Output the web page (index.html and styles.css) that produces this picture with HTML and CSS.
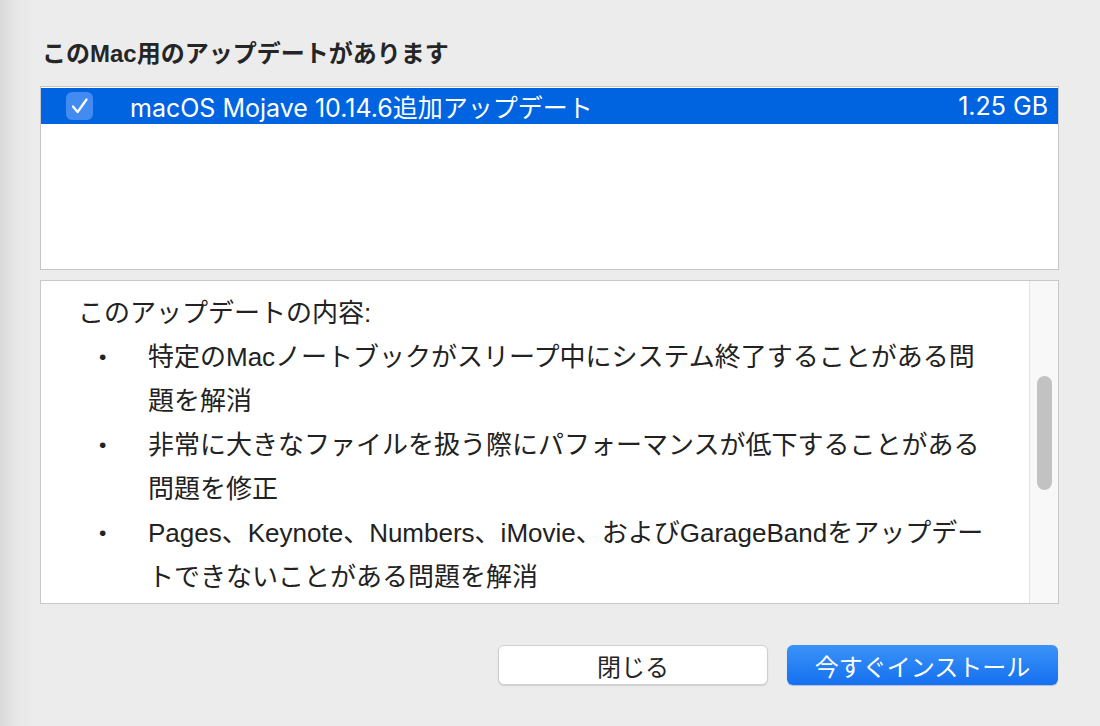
FILE: index.html
```html
<!DOCTYPE html>
<html lang="ja">
<head>
    <meta charset="UTF-8">
    <title>ソフトウェアアップデート</title>
    <link rel="stylesheet" href="styles.css">
</head>
<body>
    <div class="window">
        <h1 class="title">このMac用のアップデートがあります</h1>

        <div class="update-list">
            <div class="update-row selected">
                <span class="checkbox">
                    <svg width="20" height="20" viewBox="0 0 20 20"><path d="M3 10.5 L7.6 16 L16.5 3.5" fill="none" stroke="#fff" stroke-width="2.3" stroke-linecap="round" stroke-linejoin="round"/></svg>
                </span>
                <span class="update-name">macOS Mojave 10.14.6追加アップデート</span>
                <span class="update-size">1.25 GB</span>
            </div>
        </div>

        <div class="notes">
            <div class="notes-body">
                <p>このアップデートの内容:</p>
                <ul>
                    <li>特定のMacノートブックがスリープ中にシステム終了することがある問題を解消</li>
                    <li>非常に大きなファイルを扱う際にパフォーマンスが低下することがある問題を修正</li>
                    <li>Pages、Keynote、Numbers、iMovie、およびGarageBandをアップデートできないことがある問題を解消</li>
                </ul>
            </div>
            <div class="scrollbar">
                <div class="thumb"></div>
            </div>
        </div>

        <div class="buttons">
            <button class="btn">閉じる</button>
            <button class="btn primary">今すぐインストール</button>
        </div>
    </div>
</body>
</html>
```

FILE: styles.css
```css
body {
    margin: 0; padding: 0; height: 726px; overflow: hidden;
    background: linear-gradient(to right, #d9d9d9 0, #e6e6e6 14px, #ececec 34px, #ececec 100%);
    font-family: Inter, "Liberation Sans", "Noto Sans CJK JP", sans-serif; color: #222;
}
.window {
    padding: 38px 41px 0 40px;
}
.title {
    margin: 0 0 16px 2px; font-size: 24px; line-height: 32px; font-weight: 700; color: #252525;
    font-family: "Liberation Sans", "Noto Sans CJK JP", sans-serif;
}

/* update list */
.update-list {
    height: 184px; box-sizing: border-box; border: 1px solid #c6c6c6; background: #fff; padding-top: 1px;
}
.update-row {
    display: flex; align-items: center; height: 36px; padding: 0 10px 0 25px; font-size: 25px;
}
.update-row.selected { background: #0064e1; color: #fff; }
.checkbox {
    width: 27px; height: 28px; border-radius: 6px; background: #428bf0; display: flex; align-items: center; justify-content: center;
}
.update-name { margin-left: 37px; flex: 1; }

/* release notes */
.notes {
    margin-top: 10px; height: 324px; box-sizing: border-box; border: 1px solid #c8c8c8; background: #fff;
    display: flex; overflow: hidden;
}
.notes-body {
    flex: 1; padding: 10px 0 0 37px; font-family: "Liberation Sans", "Noto Sans CJK JP", sans-serif;
    font-size: 26px; line-height: 44px; color: #222;
}
.notes-body p { margin: 0; }
.notes-body ul { margin: 0; padding: 0; list-style: none; width: 915px; }
.notes-body li { display: flex; }
.notes-body li::before {
    content: "•"; flex: 0 0 70px; box-sizing: border-box; padding-left: 21px; font-size: 21px;
}
.scrollbar {
    width: 29px; background: #f8f8f8; border-left: 1px solid #e3e3e3; padding-top: 95px; box-sizing: border-box;
}
.thumb {
    width: 15px; height: 114px; margin-left: 7px; border-radius: 8px; background: #c2c2c2;
}

/* buttons */
.buttons {
    margin-top: 41px; display: flex; justify-content: flex-end; gap: 19px; padding-right: 1px;
}
.btn {
    width: 270px; height: 40px; border-radius: 6px; font-size: 24px; cursor: pointer;
    font-family: "Liberation Sans", "Noto Sans CJK JP", sans-serif;
    background: #fff; color: #262626; border: 1px solid #cfcfcf; box-shadow: 0 1px 1px rgba(0,0,0,0.12);
}
.btn.primary {
    width: 271px; color: #fff; border: none;
    background: linear-gradient(to bottom, #3a93f7, #1470f0);
    box-shadow: 0 1px 1px rgba(0,60,160,0.25);
}
```
